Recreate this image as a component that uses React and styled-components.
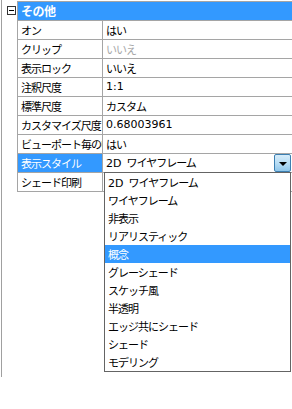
import React from "react"
import styled, { createGlobalStyle } from 'styled-components'

const GlobalStyle = createGlobalStyle`
    html, body {
        margin: 0;
        padding: 0;
        background: #fff;
    }
    body {
        font-family: "Noto Sans CJK JP", sans-serif;
        font-size: 11px;
        color: #000;
    }
`

const BLUE = '#3399ff'
const LINE = '#a5a5a5'

const Panel = styled.div`
    position: relative;
    margin-left: 1px;
    border-left: 1px solid #a0a0a0;
    height: 377px;
    padding-top: 1px;
    box-sizing: border-box;
`

const Header = styled.div`
    display: flex;
    height: 20px;
`

const Gutter = styled.div`
    width: 15px;
    display: flex;
    justify-content: center;
    padding-top: 5px;
    box-sizing: border-box;
`

const MinusBox = styled.div`
    width: 9px;
    height: 9px;
    border: 1px solid #333;
    box-sizing: border-box;
    margin-left: 3px;
    display: flex;
    align-items: center;
    justify-content: center;
    &::after {
        content: '';
        width: 5px;
        height: 1px;
        background: #000;
    }
`

const HeaderCell = styled.div`
    flex: 1;
    background: ${BLUE};
    border-top: 1px solid ${LINE};
    border-bottom: 1px solid ${LINE};
    border-left: 1px solid ${LINE};
    color: #fff;
    font-weight: bold;
    font-size: 12px;
    line-height: 18px;
    padding-left: 3px;
    letter-spacing: -0.5px;
`

const Row = styled.div`
    display: flex;
    height: 19px;
    padding-left: 15px;
`

const NameCell = styled.div`
    width: 86px;
    flex: none;
    box-sizing: border-box;
    border-left: 1px solid ${LINE};
    border-right: 1px solid ${LINE};
    border-bottom: 1px solid ${LINE};
    background: ${p => p.$selected ? BLUE : '#fff'};
    color: ${p => p.$selected ? '#fff' : '#000'};
    line-height: 18px;
    padding-left: 3px;
    white-space: nowrap;
    overflow: hidden;
    letter-spacing: -1px;
`

const ValueCell = styled.div`
    flex: 1;
    display: flex;
    align-items: center;
    border-bottom: 1px solid ${LINE};
    line-height: 18px;
    padding-left: 3px;
    white-space: nowrap;
    overflow: hidden;
    letter-spacing: -1px;
    color: ${p => p.$disabled ? '#a8a8a8' : '#000'};
`

const Latin = styled.span`
    font-family: "DejaVu Sans", "Noto Sans CJK JP", sans-serif;
    font-size: 11px;
    letter-spacing: 0;
    margin-right: ${p => p.$gap ? '5px' : '0'};
`

const ComboText = styled.div`
    flex: 1;
`

const ComboButton = styled.div`
    width: 17px;
    height: 18px;
    margin-right: 1px;
    box-sizing: border-box;
    border: 1px solid #3c7fb1;
    border-radius: 2px;
    background: linear-gradient(#d6ecfa 0%, #b9def5 50%, #8fc6ea 100%);
    display: flex;
    align-items: center;
    justify-content: center;
    &::after {
        content: '';
        border-left: 4px solid transparent;
        border-right: 4px solid transparent;
        border-top: 4px solid #000;
        margin-top: 1px;
    }
`

const DropList = styled.div`
    position: absolute;
    left: 102px;
    top: 172px;
    width: 187px;
    height: 200px;
    box-sizing: border-box;
    border: 1px solid #646464;
    background: #fff;
    display: flex;
    flex-direction: column;
`

const DropItem = styled.div`
    height: 18px;
    line-height: 18px;
    padding-left: 3px;
    letter-spacing: -1px;
    white-space: nowrap;
    background: ${p => p.$active ? BLUE : 'transparent'};
    color: ${p => p.$active ? '#fff' : '#000'};
`

const rows = [
    { name: 'オン', value: 'はい' },
    { name: 'クリップ', value: 'いいえ', disabled: true },
    { name: '表示ロック', value: 'いいえ' },
    { name: '注釈尺度', latin: '1:1' },
    { name: '標準尺度', value: 'カスタム' },
    { name: 'カスタマイズ尺度', latin: '0.68003961' },
    { name: 'ビューポート毎のUCS', value: 'はい' },
]

const styles = [
    '2D ワイヤフレーム', 'ワイヤフレーム', '非表示', 'リアリスティック', '概念',
    'グレーシェード', 'スケッチ風', '半透明', 'エッジ共にシェード', 'シェード', 'モデリング',
]

const ItemLabel = ({ text }) => {
    if (text.startsWith('2D ')) {
        return <><Latin $gap>2D</Latin>{text.slice(3)}</>
    }
    return text
}

const App = () => {
    return (
        <>
            <GlobalStyle />
            <Panel>
                <Header>
                    <Gutter><MinusBox /></Gutter>
                    <HeaderCell>その他</HeaderCell>
                </Header>
                {rows.map(r => (
                    <Row key={r.name}>
                        <NameCell>{r.name}</NameCell>
                        <ValueCell $disabled={r.disabled}>
                            {r.latin ? <Latin>{r.latin}</Latin> : r.value}
                        </ValueCell>
                    </Row>
                ))}
                <Row>
                    <NameCell $selected>表示スタイル</NameCell>
                    <ValueCell>
                        <ComboText><ItemLabel text="2D ワイヤフレーム" /></ComboText>
                        <ComboButton />
                    </ValueCell>
                </Row>
                <Row>
                    <NameCell>シェード印刷</NameCell>
                    <ValueCell />
                </Row>
                <DropList>
                    {styles.map(s => (
                        <DropItem key={s} $active={s === '概念'}>
                            <ItemLabel text={s} />
                        </DropItem>
                    ))}
                </DropList>
            </Panel>
        </>
    )
}

export default App
